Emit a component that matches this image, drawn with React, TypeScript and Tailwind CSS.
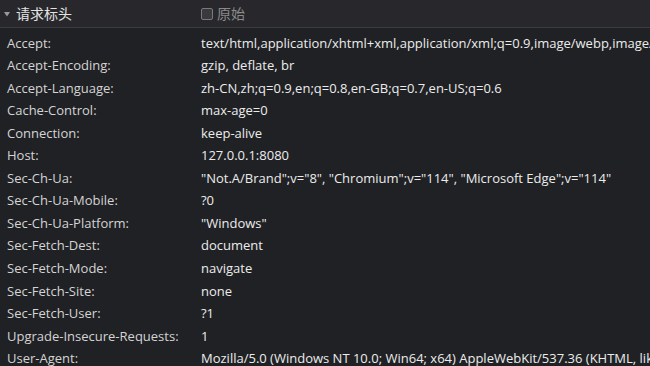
import React from "react";

const rows: [string, string][] = [
  ["Accept:", "text/html,application/xhtml+xml,application/xml;q=0.9,image/webp,image/apng,*/*;q=0.8"],
  ["Accept-Encoding:", "gzip, deflate, br"],
  ["Accept-Language:", "zh-CN,zh;q=0.9,en;q=0.8,en-GB;q=0.7,en-US;q=0.6"],
  ["Cache-Control:", "max-age=0"],
  ["Connection:", "keep-alive"],
  ["Host:", "127.0.0.1:8080"],
  ["Sec-Ch-Ua:", "\"Not.A/Brand\";v=\"8\", \"Chromium\";v=\"114\", \"Microsoft Edge\";v=\"114\""],
  ["Sec-Ch-Ua-Mobile:", "?0"],
  ["Sec-Ch-Ua-Platform:", "\"Windows\""],
  ["Sec-Fetch-Dest:", "document"],
  ["Sec-Fetch-Mode:", "navigate"],
  ["Sec-Fetch-Site:", "none"],
  ["Sec-Fetch-User:", "?1"],
  ["Upgrade-Insecure-Requests:", "1"],
  ["User-Agent:", "Mozilla/5.0 (Windows NT 10.0; Win64; x64) AppleWebKit/537.36 (KHTML, like Gecko)"],
];

export default function App() {
  return (
    <div
      className="w-[650px] h-[366px] overflow-hidden bg-[#202124] text-[13px]"
      style={{ fontFamily: '"Open Sans", "Noto Sans CJK SC", sans-serif' }}
    >
      <div className="flex items-center h-[28px] bg-[#28282c] border-b border-[#3d3d40]">
        <div className="w-[201px] flex items-center pl-[4px]">
          <svg width="6" height="6" viewBox="0 0 6 6" className="mr-[6px]">
            <path d="M0 1 L6 1 L3 5.5 Z" fill="#9a9a9a" />
          </svg>
          <span className="text-[14px] text-[#e3e3e3]">请求标头</span>
        </div>
        <div className="flex items-center">
          <span className="w-[12px] h-[12px] rounded-[2px] border border-[#7a7a7a] bg-[#3a3a3d] mr-[4px]" />
          <span className="text-[14px] text-[#8a8a8a]">原始</span>
        </div>
      </div>
      <div className="pt-[4px]">
        {rows.map(([k, v]) => (
          <div key={k} className="flex h-[22.55px] items-center whitespace-nowrap">
            <div className="w-[201px] shrink-0 pl-[7px] text-[#d4d4d4]">{k}</div>
            <div className="text-[#ececec]">{v}</div>
          </div>
        ))}
      </div>
    </div>
  );
}
